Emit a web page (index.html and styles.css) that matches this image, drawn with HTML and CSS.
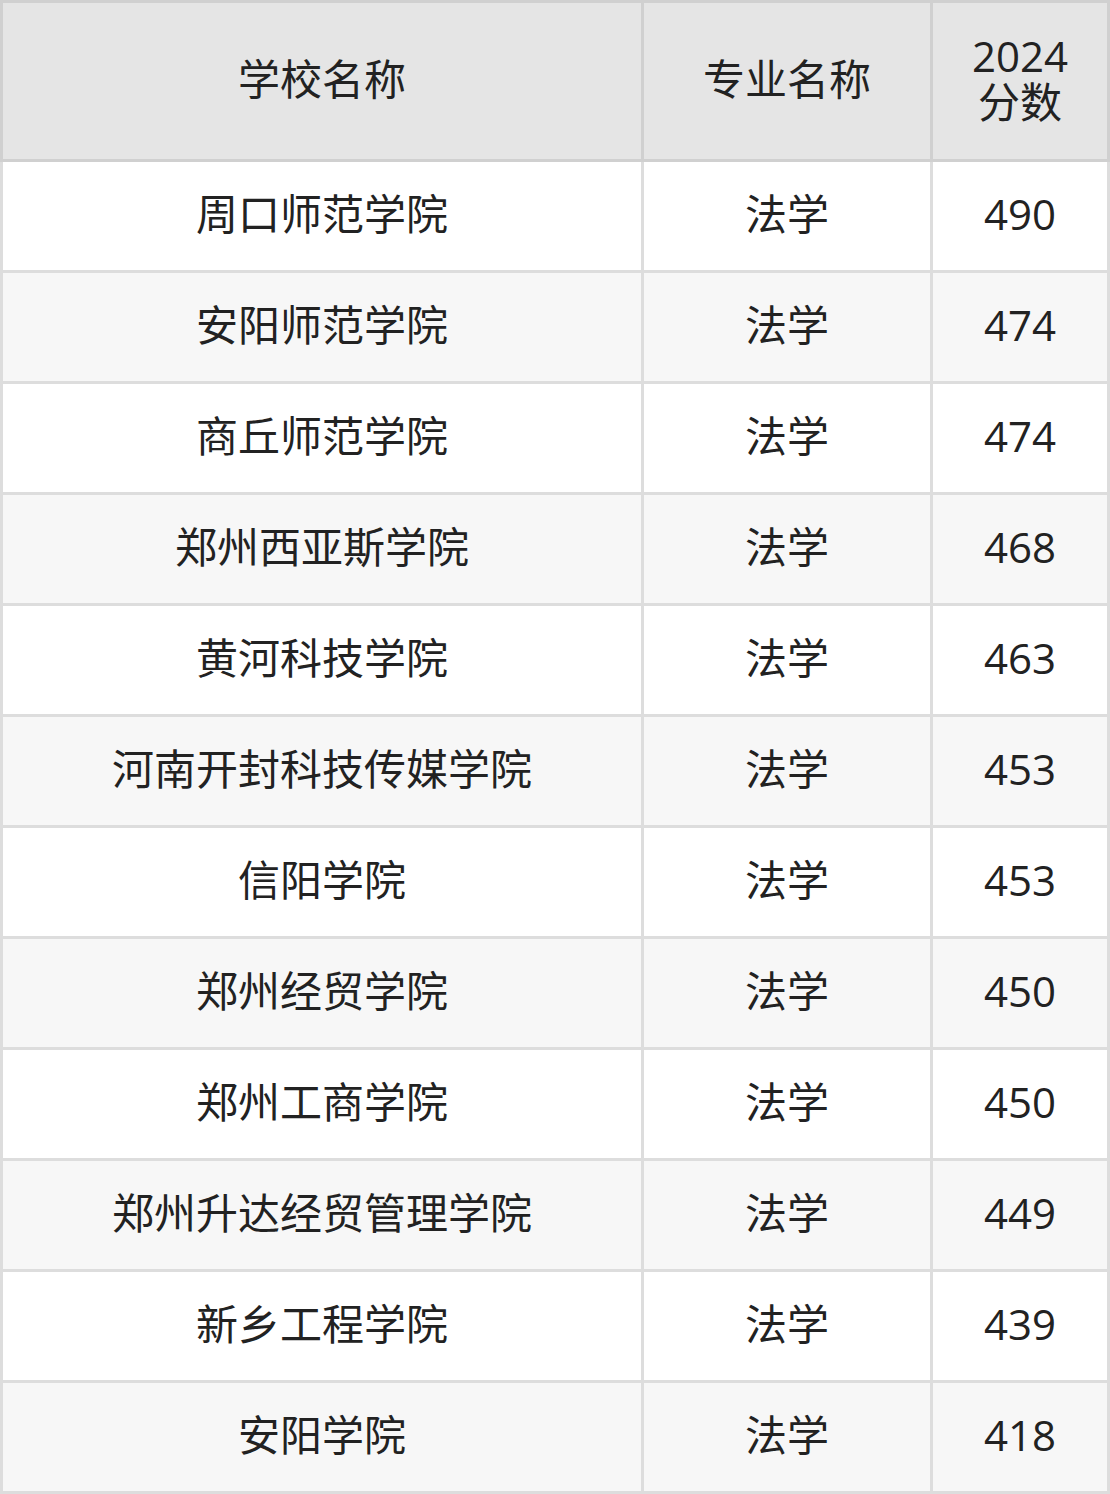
FILE: index.html
```html
<!DOCTYPE html>
<html lang="zh-CN">
<head>
<meta charset="utf-8">
<title>2024分数</title>
<link rel="stylesheet" href="styles.css">
</head>
<body>
<div class="table">
  <div class="row head">
    <div class="cell">学校名称</div>
    <div class="cell">专业名称</div>
    <div class="cell">2024<br>分数</div>
  </div>
  <div class="body">
    <div class="row"><div class="cell">周口师范学院</div><div class="cell">法学</div><div class="cell">490</div></div>
    <div class="row alt"><div class="cell">安阳师范学院</div><div class="cell">法学</div><div class="cell">474</div></div>
    <div class="row"><div class="cell">商丘师范学院</div><div class="cell">法学</div><div class="cell">474</div></div>
    <div class="row alt"><div class="cell">郑州西亚斯学院</div><div class="cell">法学</div><div class="cell">468</div></div>
    <div class="row"><div class="cell">黄河科技学院</div><div class="cell">法学</div><div class="cell">463</div></div>
    <div class="row alt"><div class="cell">河南开封科技传媒学院</div><div class="cell">法学</div><div class="cell">453</div></div>
    <div class="row"><div class="cell">信阳学院</div><div class="cell">法学</div><div class="cell">453</div></div>
    <div class="row alt"><div class="cell">郑州经贸学院</div><div class="cell">法学</div><div class="cell">450</div></div>
    <div class="row"><div class="cell">郑州工商学院</div><div class="cell">法学</div><div class="cell">450</div></div>
    <div class="row alt"><div class="cell">郑州升达经贸管理学院</div><div class="cell">法学</div><div class="cell">449</div></div>
    <div class="row"><div class="cell">新乡工程学院</div><div class="cell">法学</div><div class="cell">439</div></div>
    <div class="row alt"><div class="cell">安阳学院</div><div class="cell">法学</div><div class="cell">418</div></div>
  </div>
</div>
</body>
</html>
```

FILE: styles.css
```css
html, body {
  margin: 0;
  padding: 0;
  background: #ffffff;
}
.table {
  width: 1110px;
  font-family: "Open Sans", "Noto Sans CJK SC", sans-serif;
  font-size: 42px;
  color: #222222;
}
.row {
  display: grid;
  grid-template-columns: 638px 286px 174px;
  column-gap: 3px;
}
.head {
  background: #d0d0d0;
  padding: 3px;
}
.head .cell {
  background: #e5e5e5;
  height: 156px;
  line-height: 46px;
  padding-bottom: 4px;
  box-sizing: border-box;
}
.body {
  display: flex;
  flex-direction: column;
  gap: 3px;
  background: #dddddd;
  padding: 0 3px 3px;
}
.body .row {
  background: #dddddd;
}
.body .cell {
  background: #ffffff;
  height: 108px;
  padding-bottom: 4px;
  box-sizing: border-box;
}
.body .alt .cell {
  background: #f7f7f7;
}
.cell {
  display: flex;
  align-items: center;
  justify-content: center;
  text-align: center;
  line-height: 1.2;
}
```
